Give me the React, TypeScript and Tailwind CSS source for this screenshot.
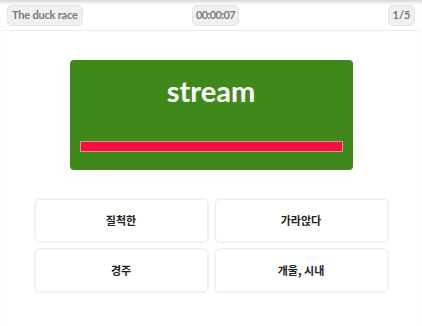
import React from "react";

const options = ["질척한", "가라앉다", "경주", "개울, 시내"];

function Badge({ children, className = "" }: { children: React.ReactNode; className?: string }) {
  return (
    <div
      className={`h-[21px] px-[4px] flex items-center rounded-[5px] bg-[#f0f0f0] border border-[#e4e4e4] text-[11px] font-bold text-[#7a7a7a] ${className}`}
    >
      {children}
    </div>
  );
}

export default function App() {
  return (
    <div
      className="w-[422px] h-[326px] bg-white shadow-[inset_0_5px_4px_-3px_rgba(0,0,0,0.18)]"
      style={{ fontFamily: 'Lato, "Noto Sans CJK KR", sans-serif' }}
    >
      <div className="mx-[2px] h-[31px] px-[5px] pt-[5px] flex items-start border-b border-[#ececec]">
        <Badge className="w-[76px] tracking-[-0.2px]">The duck race</Badge>
        <Badge className="ml-[109px] w-[47px] px-[2px] justify-center tracking-[-0.6px]">00:00:07</Badge>
        <Badge className="ml-auto w-[27px] justify-center">1/5</Badge>
      </div>

      <div className="mt-[29px] mx-auto w-[283px] h-[110px] rounded-[4px] bg-[#3f891a] flex flex-col items-center px-[10px]">
        <div className="mt-[10px] h-[40px] flex items-center text-[29px] font-bold text-white leading-none">
          stream
        </div>
        <div className="mt-[31px] w-full h-[11px] bg-[#ff0a40] border border-[#b9a29a]" />
      </div>

      <div className="mt-[28px] mx-auto w-[355px] grid grid-cols-2 gap-[5px]">
        {options.map((o) => (
          <div
            key={o}
            className="h-[45px] flex items-center justify-center rounded-[6px] border-2 border-[#f1f1f1] text-[11px] font-bold text-[#222]"
            style={{ fontFamily: '"Noto Sans CJK KR", sans-serif' }}
          >
            {o}
          </div>
        ))}
      </div>
    </div>
  );
}
